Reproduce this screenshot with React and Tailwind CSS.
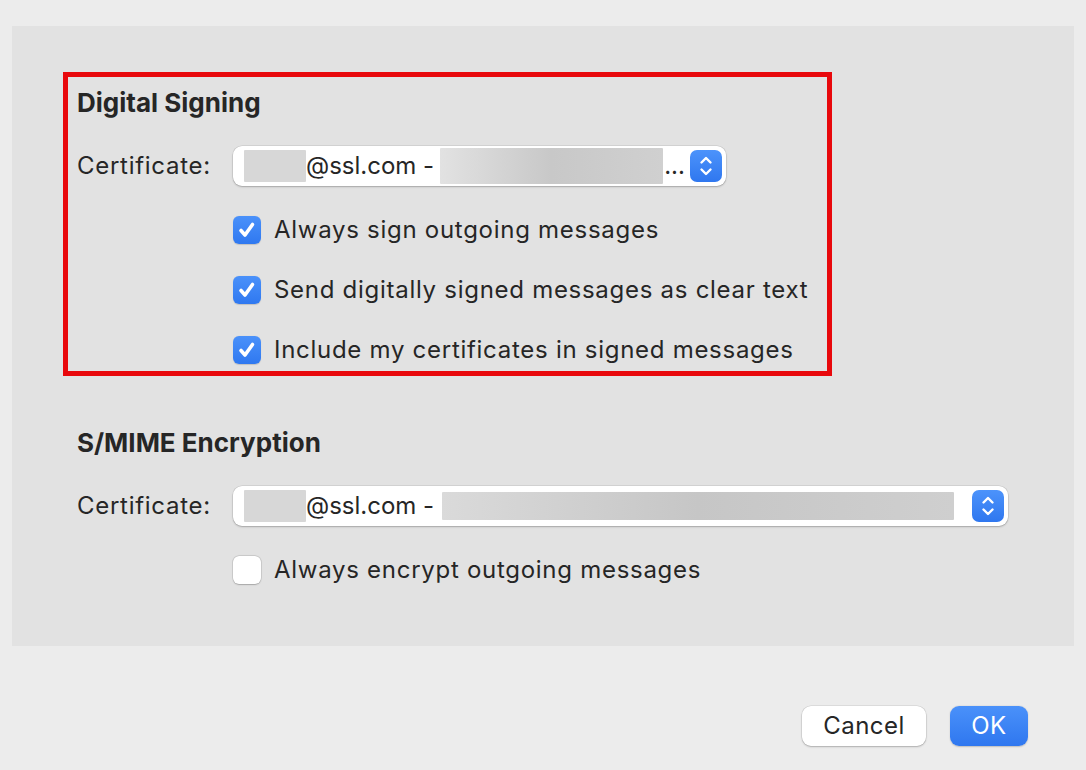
import React from 'react'

const font = { fontFamily: 'Inter, "Liberation Sans", sans-serif' }

function Stepper() {
  return (
    <div className="flex h-[32px] w-[32px] shrink-0 items-center justify-center rounded-[7px] bg-gradient-to-b from-[#4c93fb] to-[#2f77ef]">
      <svg width="16" height="24" viewBox="0 0 16 24" fill="none" stroke="white" strokeWidth="2.4" strokeLinecap="round" strokeLinejoin="round">
        <path d="M3.5 8.5 L8 4 L12.5 8.5" />
        <path d="M3.5 15.5 L8 20 L12.5 15.5" />
      </svg>
    </div>
  )
}

function Blur({ className }) {
  return <div className={`rounded-[1px] ${className}`} />
}

function Popup({ wide }) {
  return (
    <div className={`flex h-[40px] items-center rounded-[9px] bg-white pl-[11px] pr-[4px] shadow-[0_0_0_0.5px_rgba(0,0,0,0.12),0_1px_2px_rgba(0,0,0,0.22)] ${wide ? 'w-[775px]' : 'w-[493px]'}`}>
      <Blur className="h-[32px] w-[62px] bg-[#d7d7d7]" />
      <span className="text-[24px] leading-none text-[#262626]">@ssl.com -</span>
      {wide ? (
        <>
          <Blur className="ml-[8px] h-[28px] w-[512px] bg-gradient-to-r from-[#dadada] via-[#c6c6c6] to-[#cfcfcf]" />
          <div className="flex-1" />
        </>
      ) : (
        <>
          <Blur className="ml-[6px] h-[36px] w-[223px] bg-gradient-to-r from-[#e2e2e2] via-[#c8c8c8] to-[#d0d0d0]" />
          <span className="ml-[1px] text-[24px] leading-none text-[#262626]">...</span>
          <div className="flex-1" />
        </>
      )}
      <Stepper />
    </div>
  )
}

function Check({ checked, label }) {
  return (
    <div className="flex h-[28px] items-center">
      {checked ? (
        <div className="flex h-[28px] w-[28px] items-center justify-center rounded-[6px] bg-gradient-to-b from-[#4a91fa] to-[#2f78f0] shadow-[0_0.5px_1px_rgba(0,0,0,0.15)]">
          <svg width="20" height="20" viewBox="0 0 20 20" fill="none" stroke="white" strokeWidth="3.6" strokeLinecap="round" strokeLinejoin="round">
            <path d="M4 10.5 L8 15 L15.5 4.5" />
          </svg>
        </div>
      ) : (
        <div className="h-[28px] w-[28px] rounded-[6px] bg-white shadow-[0_0_0_0.5px_rgba(0,0,0,0.15),0_0.5px_1.5px_rgba(0,0,0,0.2)]" />
      )}
      <span className="ml-[13px] text-[24px] leading-none tracking-[0.72px] text-[#262626]">{label}</span>
    </div>
  )
}

export default function App() {
  return (
    <div className="h-[770px] w-[1086px] overflow-hidden bg-[#ececec] pt-[26px]" style={font}>
      <div className="mx-[12px] h-[620px] bg-[#e2e2e2] pl-[51px] pt-[46px]">
        <div className="w-[769px] border-[5px] border-[#e8080c] pl-[9px] pt-[12px] pb-[7px]">
          <div className="h-[28px] text-[26px] font-bold leading-[28px] text-[#262626]">Digital Signing</div>
          <div className="mt-[29px] flex items-center">
            <div className="w-[156px] text-[24px] leading-none tracking-[0.72px] text-[#262626]">Certificate:</div>
            <Popup />
          </div>
          <div className="mt-[30px] ml-[156px] flex flex-col gap-[32px]">
            <Check checked label="Always sign outgoing messages" />
            <Check checked label="Send digitally signed messages as clear text" />
            <Check checked label="Include my certificates in signed messages" />
          </div>
        </div>

        <div className="pl-[14px]">
          <div className="mt-[53px] h-[28px] text-[26px] font-bold leading-[28px] text-[#262626]">S/MIME Encryption</div>
          <div className="mt-[29px] flex items-center">
            <div className="w-[156px] text-[24px] leading-none tracking-[0.72px] text-[#262626]">Certificate:</div>
            <Popup wide />
          </div>
          <div className="mt-[30px] ml-[156px]">
            <Check label="Always encrypt outgoing messages" />
          </div>
        </div>
      </div>

      <div className="mt-[60px] flex justify-end gap-[24px] pr-[58px]">
        <button className="h-[40px] w-[124px] rounded-[9px] bg-white text-[24px] tracking-[0.5px] text-[#262626] shadow-[0_0_0_0.5px_rgba(0,0,0,0.12),0_1px_2px_rgba(0,0,0,0.22)]">Cancel</button>
        <button className="h-[40px] w-[78px] rounded-[9px] bg-gradient-to-b from-[#4a91fa] to-[#2f77ef] text-[24px] tracking-[0.5px] text-white shadow-[0_0.5px_1.5px_rgba(0,0,0,0.2)]">OK</button>
      </div>
    </div>
  )
}
